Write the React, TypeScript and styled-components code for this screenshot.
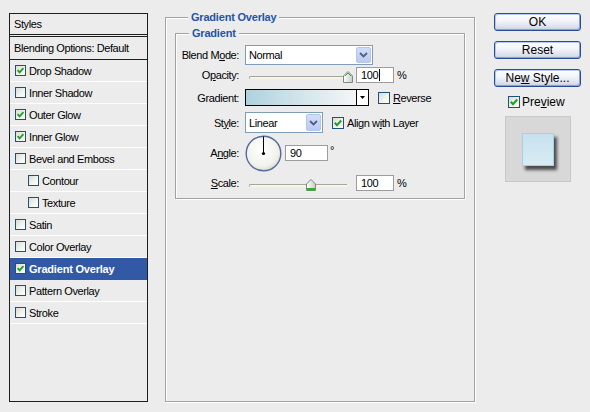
import React from "react";
import styled, { createGlobalStyle } from "styled-components";

const Global = createGlobalStyle`
  html, body { margin: 0; padding: 0; background: #ececec; }
  body {
    font-family: "Liberation Sans", Arial, sans-serif;
    font-size: 11px;
    letter-spacing: -0.4px;
    color: #000;
  }
`;

const Page = styled.div`
  display: flex;
  align-items: flex-start;
  width: 590px;
  height: 412px;
  box-sizing: border-box;
  padding: 13px 0 0 9px;
  background: #ececec;
  overflow: hidden;
`;

/* ---------- left styles list ---------- */
const StylesPanel = styled.div`
  width: 139px;
  height: 389px;
  box-sizing: border-box;
  border: 1px solid #1e1e1e;
  display: flex;
  flex-direction: column;
  flex-shrink: 0;
`;

const PanelHeader = styled.div`
  height: 20px;
  display: flex;
  align-items: center;
  padding-left: 4px;
  border-bottom: 3px double #1e1e1e;
`;

const BlendingRow = styled.div`
  height: 22px;
  display: flex;
  align-items: center;
  padding-left: 4px;
  border-bottom: 1px solid #1e1e1e;
`;

const StyleItem = styled.div<{ $indent?: boolean; $selected?: boolean }>`
  height: 21px;
  display: flex;
  align-items: center;
  gap: 3px;
  padding-left: ${(p) => (p.$indent ? 18 : 5)}px;
  border-bottom: 1px solid ${(p) => (p.$selected ? "#3159a5" : "#ffffff")};
  background: ${(p) => (p.$selected ? "#3159a5" : "transparent")};
  color: ${(p) => (p.$selected ? "#ffffff" : "#000")};
  font-weight: ${(p) => (p.$selected ? "bold" : "normal")};
  letter-spacing: ${(p) => (p.$selected ? "-0.2px" : "-0.4px")};
`;

/* ---------- checkbox ---------- */
const Box = styled.span<{ $size: number }>`
  width: ${(p) => p.$size}px;
  height: ${(p) => p.$size}px;
  box-sizing: border-box;
  border: 1px solid #1c5180;
  background: linear-gradient(135deg, #dcdcd5 0%, #f4f4f0 60%, #ffffff 100%);
  display: inline-flex;
  align-items: center;
  justify-content: center;
  flex-shrink: 0;
`;

const Checkbox: React.FC<{ checked?: boolean; size?: number }> = ({ checked, size = 11 }) => (
  <Box $size={size}>
    {checked && (
      <svg width={size - 2} height={size - 2} viewBox="0 0 9 9">
        <path d="M1.6 4.2 L3.6 6.4 L7.4 2.2" fill="none" stroke="#21a121" strokeWidth="1.9" />
      </svg>
    )}
  </Box>
);

/* ---------- group boxes ---------- */
const GroupBox = styled.div`
  box-sizing: border-box;
  border: 1px solid #a2a2a2;
  box-shadow: 1px 1px 0 #ffffff, inset 1px 1px 0 #ffffff;
`;

const OuterGroup = styled(GroupBox)`
  width: 310px;
  height: 385px;
  margin: 4px 0 0 17px;
  padding: 0 9px;
  flex-shrink: 0;
`;

const InnerGroup = styled(GroupBox)`
  height: 166px;
  margin-top: 9px;
`;

const GroupTitle = styled.div`
  display: table;
  margin: -7px 0 0 13px;
  padding: 0 3px;
  height: 13px;
  line-height: 13px;
  background: #ececec;
  color: #2455a5;
  font-weight: bold;
  letter-spacing: -0.2px;
`;

const Rows = styled.div`
  margin-top: 5px;
  display: flex;
  flex-direction: column;
`;

const Row = styled.div<{ $h: number }>`
  height: ${(p) => p.$h}px;
  display: flex;
  align-items: center;
`;

const Label = styled.span`
  width: 63px;
  margin-right: 6px;
  text-align: right;
  flex-shrink: 0;
`;

const U = styled.span`
  text-decoration: underline;
`;

/* ---------- controls ---------- */
const Select = styled.div<{ $w: number; $h: number }>`
  width: ${(p) => p.$w}px;
  height: ${(p) => p.$h}px;
  box-sizing: border-box;
  border: 1px solid #7f9db9;
  background: #fff;
  display: flex;
  align-items: center;
  padding-left: 3px;
  flex-shrink: 0;
`;

const SelectButton = styled.span`
  align-self: stretch;
  width: 15px;
  margin: 1px 1px 1px auto;
  box-sizing: border-box;
  border: 1px solid #b4c6ee;
  border-radius: 2px;
  background: linear-gradient(180deg, #d2def9 0%, #b9cbf1 100%);
  display: flex;
  align-items: center;
  justify-content: center;
`;

const Chevron = () => (
  <svg width="9" height="6" viewBox="0 0 9 6">
    <path d="M1 1 L4.5 4.5 L8 1" fill="none" stroke="#4d6185" strokeWidth="1.8" />
  </svg>
);

const SliderWrap = styled.div`
  position: relative;
  width: 104px;
  height: 16px;
  margin-left: 4px;
  flex-shrink: 0;
`;

const Track = styled.div`
  position: absolute;
  left: 0;
  top: 9px;
  width: 98px;
  height: 3px;
  box-sizing: border-box;
  border-top: 1px solid #a7a7a0;
  border-left: 1px solid #a7a7a0;
  border-radius: 2px 0 0 2px;
  background: #f6f6e8;
`;

const Thumb = styled.svg`
  position: absolute;
  top: 4px;
`;

const Slider: React.FC<{ pos: number; green?: boolean }> = ({ pos, green }) => (
  <SliderWrap>
    <Track />
    <Thumb width="10" height="12" viewBox="0 0 10 12" style={{ left: `${pos - 5}px` }}>
      <defs>
        <linearGradient id={green ? "thg" : "tho"} x1="0" y1="0" x2="1" y2="0">
          <stop offset="0" stopColor="#ffffff" />
          <stop offset="1" stopColor="#c9cdc6" />
        </linearGradient>
      </defs>
      <path
        d="M0.5 5 L5 0.5 L9.5 5 L9.5 11.5 L0.5 11.5 Z"
        fill={`url(#${green ? "thg" : "tho"})`}
        stroke="#7d8a7d"
        strokeWidth="1"
      />
      {green ? (
        <rect x="1" y="9" width="8" height="2.5" fill="#2cb12c" />
      ) : (
        <path d="M2 5 L5 2 L8 5" fill="none" stroke="#4f9a4f" strokeWidth="1" />
      )}
    </Thumb>
  </SliderWrap>
);

const NumberBox = styled.div<{ $w: number; $ml: number }>`
  width: ${(p) => p.$w}px;
  height: 16px;
  margin-left: ${(p) => p.$ml}px;
  box-sizing: border-box;
  border: 1px solid #9c9c9c;
  background: #fff;
  display: flex;
  align-items: center;
  padding-left: 4px;
  flex-shrink: 0;
`;

const Caret = styled.span`
  width: 1px;
  height: 12px;
  margin-left: 1px;
  background: #000;
`;

const Unit = styled.span<{ $raise?: boolean }>`
  margin-left: ${(p) => (p.$raise ? 2 : 3)}px;
  margin-top: ${(p) => (p.$raise ? -6 : 0)}px;
`;

const GradientField = styled.div`
  width: 124px;
  height: 17px;
  box-sizing: border-box;
  border: 1px solid #000;
  display: flex;
  flex-shrink: 0;
`;

const GradientFill = styled.div`
  flex: 1;
  background: linear-gradient(90deg, #aed2df 0%, #cfe3ea 45%, #f4f6f7 100%);
`;

const GradientArrow = styled.div`
  width: 11px;
  border-left: 1px solid #000;
  background: #fff;
  display: flex;
  align-items: center;
  justify-content: center;
`;

const CheckText = styled.span<{ $ml: number }>`
  display: flex;
  align-items: center;
  gap: 3px;
  margin-left: ${(p) => p.$ml}px;
`;

const Dial = () => (
  <svg width="37" height="37" viewBox="0 0 37 37" style={{ flexShrink: 0 }}>
    <defs>
      <radialGradient id="dialg" cx="0.45" cy="0.4" r="0.6">
        <stop offset="0" stopColor="#ffffff" />
        <stop offset="0.8" stopColor="#f1f1ec" />
        <stop offset="1" stopColor="#dcdcd6" />
      </radialGradient>
    </defs>
    <circle cx="18.5" cy="18.5" r="17.3" fill="url(#dialg)" stroke="#56699a" strokeWidth="1.4" />
    <line x1="18.5" y1="18.5" x2="18.5" y2="1.5" stroke="#000" strokeWidth="1" />
    <circle cx="18.5" cy="18.5" r="1.6" fill="#000" />
  </svg>
);

/* ---------- right column ---------- */
const Actions = styled.div`
  display: flex;
  flex-direction: column;
  align-items: center;
  width: 87px;
  margin-left: 19px;
  flex-shrink: 0;
`;

const Button = styled.div`
  width: 87px;
  height: 18px;
  box-sizing: border-box;
  margin-bottom: 10px;
  border: 1px solid #2a4d92;
  border-radius: 3px;
  background: linear-gradient(180deg, #ffffff 0%, #f1f3f8 45%, #d8deea 85%, #c3cbdc 100%);
  box-shadow: inset 1px 1px 0 #b7c9ef, inset -1px -1px 0 #8aa3d6;
  display: flex;
  align-items: center;
  justify-content: center;
  font-size: 12px;
  letter-spacing: 0;
`;

const PreviewToggle = styled.div`
  align-self: flex-start;
  margin: -1px 0 0 14px;
  height: 12px;
  display: flex;
  align-items: center;
  gap: 2px;
  font-size: 12px;
  letter-spacing: 0;
`;

const PreviewBox = styled.div`
  margin-top: 8px;
  width: 66px;
  height: 66px;
  box-sizing: border-box;
  border: 1px solid #c8c8c8;
  background: #d8d8d8;
  display: flex;
  align-items: center;
  justify-content: center;
`;

const PreviewSwatch = styled.div`
  width: 32px;
  height: 33px;
  box-sizing: border-box;
  border: 1px solid #a3d2e2;
  background: linear-gradient(180deg, #c6e2ee 0%, #d8ebf3 100%);
  box-shadow: 3px 4px 3px rgba(0, 0, 0, 0.65);
`;

type Item = { name: string; checked?: boolean; indent?: boolean; selected?: boolean };

const items: Item[] = [
  { name: "Drop Shadow", checked: true },
  { name: "Inner Shadow" },
  { name: "Outer Glow", checked: true },
  { name: "Inner Glow", checked: true },
  { name: "Bevel and Emboss" },
  { name: "Contour", indent: true },
  { name: "Texture", indent: true },
  { name: "Satin" },
  { name: "Color Overlay" },
  { name: "Gradient Overlay", checked: true, selected: true },
  { name: "Pattern Overlay" },
  { name: "Stroke" },
];

export default function App() {
  return (
    <>
      <Global />
      <Page>
        <StylesPanel>
          <PanelHeader>Styles</PanelHeader>
          <BlendingRow>Blending Options: Default</BlendingRow>
          {items.map((it) => (
            <StyleItem key={it.name} $indent={it.indent} $selected={it.selected}>
              <Checkbox checked={it.checked} />
              <span>{it.name}</span>
            </StyleItem>
          ))}
        </StylesPanel>

        <OuterGroup>
          <GroupTitle>Gradient Overlay</GroupTitle>
          <InnerGroup>
            <GroupTitle>Gradient</GroupTitle>
            <Rows>
              <Row $h={20}>
                <Label>
                  Blend M<U>o</U>de:
                </Label>
                <Select $w={128} $h={20}>
                  Normal
                  <SelectButton>
                    <Chevron />
                  </SelectButton>
                </Select>
              </Row>
              <Row $h={20}>
                <Label>
                  O<U>p</U>acity:
                </Label>
                <Slider pos={99} />
                <NumberBox $w={38} $ml={3}>
                  100
                  <Caret />
                </NumberBox>
                <Unit>%</Unit>
              </Row>
              <Row $h={25}>
                <Label>Gradient:</Label>
                <GradientField>
                  <GradientFill />
                  <GradientArrow>
                    <svg width="5" height="3" viewBox="0 0 5 3">
                      <path d="M0 0 L5 0 L2.5 3 Z" fill="#000" />
                    </svg>
                  </GradientArrow>
                </GradientField>
                <CheckText $ml={9}>
                  <Checkbox size={12} />
                  <span>
                    <U>R</U>everse
                  </span>
                </CheckText>
              </Row>
              <Row $h={25}>
                <Label>
                  St<U>y</U>le:
                </Label>
                <Select $w={78} $h={21}>
                  Linear
                  <SelectButton>
                    <Chevron />
                  </SelectButton>
                </Select>
                <CheckText $ml={9}>
                  <Checkbox checked size={12} />
                  <span>
                    Align w<U>i</U>th Layer
                  </span>
                </CheckText>
              </Row>
              <Row $h={36}>
                <Label>
                  A<U>n</U>gle:
                </Label>
                <Dial />
                <NumberBox $w={43} $ml={3}>
                  90
                </NumberBox>
                <Unit $raise>°</Unit>
              </Row>
              <Row $h={24}>
                <Label>
                  <U>S</U>cale:
                </Label>
                <Slider pos={62} green />
                <NumberBox $w={38} $ml={3}>
                  100
                </NumberBox>
                <Unit>%</Unit>
              </Row>
            </Rows>
          </InnerGroup>
        </OuterGroup>

        <Actions>
          <Button>OK</Button>
          <Button>Reset</Button>
          <Button>
            Ne<U>w</U>&nbsp;Style...
          </Button>
          <PreviewToggle>
            <Checkbox checked size={12} />
            <span>
              Pre<U>v</U>iew
            </span>
          </PreviewToggle>
          <PreviewBox>
            <PreviewSwatch />
          </PreviewBox>
        </Actions>
      </Page>
    </>
  );
}
